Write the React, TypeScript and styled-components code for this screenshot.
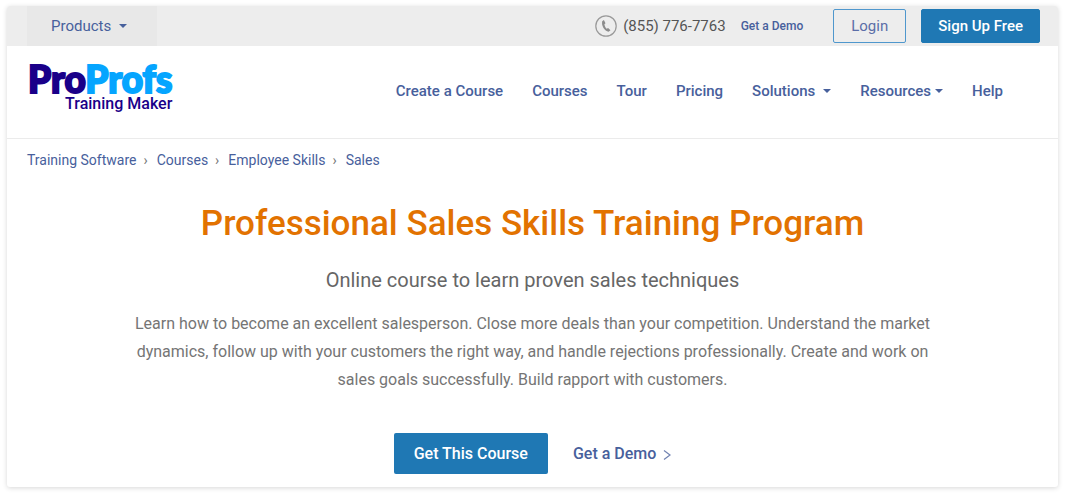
import React from "react";
import styled, { createGlobalStyle } from "styled-components";

const navy = "#47609c";
const blue = "#1f78b4";

const GlobalStyle = createGlobalStyle`
  *, *::before, *::after { box-sizing: border-box; }
  body {
    margin: 0;
    background: #fff;
    font-family: Roboto, "Liberation Sans", sans-serif;
    color: #666;
  }
  a { color: ${navy}; text-decoration: none; }
  button { font-family: inherit; cursor: pointer; }
`;

const Card = styled.div`
  margin: 6px 7px 8px;
  background: #fff;
  border-radius: 3px;
  box-shadow: 0 1px 5px rgba(0, 0, 0, 0.16);
`;

const TopBar = styled.div`
  display: flex;
  align-items: center;
  height: 40px;
  padding: 0 18px 0 20px;
  background: #ededed;
  border-radius: 3px 3px 0 0;
`;

const ProductsButton = styled.button`
  display: flex;
  align-items: center;
  gap: 8px;
  align-self: stretch;
  width: 130px;
  padding: 0 24px;
  border: 0;
  background: #e8e8e8;
  color: ${navy};
  font-size: 15px;
`;

const Caret = styled.span`
  display: inline-block;
  border: 4px solid transparent;
  border-top-color: currentColor;
  border-bottom-width: 0;
`;

const Phone = styled.a`
  display: flex;
  align-items: center;
  gap: 6px;
  margin-left: auto;
  color: #555;
  font-size: 15px;
`;

const DemoLink = styled.a`
  margin: 0 30px 0 15px;
  font-size: 12px;
  font-weight: 500;
`;

const BarButton = styled.button<{ $filled?: boolean }>`
  height: 34px;
  margin-top: -1px;
  padding: 0 ${(p) => (p.$filled ? 16 : 17)}px;
  border: 1px solid ${(p) => (p.$filled ? blue : "#4f97cd")};
  border-radius: 2px;
  background: ${(p) => (p.$filled ? blue : "transparent")};
  color: ${(p) => (p.$filled ? "#fff" : "#5b6ea8")};
  font-size: 15px;
  font-weight: ${(p) => (p.$filled ? 500 : 400)};
  & + & { margin-left: 15px; }
`;

const Header = styled.header`
  display: flex;
  align-items: flex-start;
  justify-content: space-between;
  height: 93px;
  padding: 17px 55px 0 21px;
  border-bottom: 1px solid #ebebeb;
`;

const Logo = styled.a`
  display: flex;
  flex-direction: column;
  align-items: flex-end;
  color: #1a0089;
`;

const Brand = styled.span`
  font-family: Lato, sans-serif;
  font-size: 37px;
  font-weight: 900;
  line-height: 32px;
  -webkit-text-stroke: 2px currentColor;
  span { color: #05a5ff; }
`;

const Product = styled.span`
  font-size: 16px;
  font-weight: 500;
  line-height: 18px;
`;

const Nav = styled.nav`
  display: flex;
  gap: 29px;
  padding-top: 18px;
`;

const NavLink = styled.a<{ $gap?: number }>`
  display: flex;
  align-items: center;
  gap: ${(p) => p.$gap ?? 8}px;
  font-size: 15px;
  font-weight: 500;
  line-height: 20px;
`;

const Crumbs = styled.nav`
  display: flex;
  gap: 7px;
  padding: 11px 20px;
  font-size: 14px;
  line-height: 20px;
  span { color: #777; margin-right: 2px; }
`;

const Hero = styled.main`
  display: flex;
  flex-direction: column;
  align-items: center;
  padding: 21px 20px 13px;
  text-align: center;
`;

const Title = styled.h1`
  margin: 0;
  color: #e27200;
  font-size: 35px;
  font-weight: 500;
  line-height: 44px;
`;

const Subtitle = styled.h2`
  margin: 22px 0 18px;
  font-size: 20px;
  font-weight: 400;
  line-height: 24px;
`;

const Description = styled.p`
  max-width: 800px;
  margin: 0 0 39px;
  color: #757575;
  font-size: 16px;
  line-height: 28px;
`;

const Actions = styled.div`
  display: flex;
  align-items: center;
  gap: 25px;
`;

const CourseButton = styled.button`
  height: 41px;
  padding: 0 20px;
  border: 0;
  border-radius: 2px;
  background: ${blue};
  color: #fff;
  font-size: 16px;
  font-weight: 500;
`;

const TextAction = styled.a`
  display: flex;
  align-items: center;
  gap: 7px;
  font-size: 16px;
  font-weight: 500;
`;

const PhoneIcon = () => (
  <svg width="22" height="22" viewBox="0 0 22 22" aria-hidden="true">
    <circle cx="11" cy="11" r="10.2" fill="none" stroke="#999" strokeWidth="1.2" />
    <path
      d="M8.9 5 7.2 6.2C6.2 10.8 9.5 15.8 13.6 16.8l1.9-1.5-2.4-2.2-1.4.7C10.6 12.8 9.8 11.2 9.4 9.2l1.1-1z"
      fill="#8c8c8c"
    />
  </svg>
);

const ChevronIcon = () => (
  <svg width="8" height="12" viewBox="0 0 8 12" fill="none" stroke="#7183b2" strokeWidth="1.2" aria-hidden="true">
    <path d="m1 2.5 6 4.5-6 4.5" />
  </svg>
);

const links: { label: string; menu?: boolean; gap?: number }[] = [
  { label: "Create a Course" },
  { label: "Courses" },
  { label: "Tour" },
  { label: "Pricing" },
  { label: "Solutions", menu: true },
  { label: "Resources", menu: true, gap: 4 },
  { label: "Help" },
];

const crumbs = ["Training Software", "Courses", "Employee Skills", "Sales"];

export default function App() {
  return (
    <>
      <GlobalStyle />
      <Card>
        <TopBar>
          <ProductsButton>
            Products <Caret />
          </ProductsButton>
          <Phone href="tel:8557767763">
            <PhoneIcon />
            (855) 776-7763
          </Phone>
          <DemoLink href="#demo">Get a Demo</DemoLink>
          <BarButton>Login</BarButton>
          <BarButton $filled>Sign Up Free</BarButton>
        </TopBar>
        <Header>
          <Logo href="#home">
            <Brand>
              Pro<span>Profs</span>
            </Brand>
            <Product>Training Maker</Product>
          </Logo>
          <Nav>
            {links.map((l) => (
              <NavLink key={l.label} href="#nav" $gap={l.gap}>
                {l.label}
                {l.menu && <Caret />}
              </NavLink>
            ))}
          </Nav>
        </Header>
        <Crumbs aria-label="Breadcrumb">
          {crumbs.map((c, i) => (
            <React.Fragment key={c}>
              {i > 0 && <span>›</span>}
              <a href="#crumb">{c}</a>
            </React.Fragment>
          ))}
        </Crumbs>
        <Hero>
          <Title>Professional Sales Skills Training Program</Title>
          <Subtitle>Online course to learn proven sales techniques</Subtitle>
          <Description>
            Learn how to become an excellent salesperson. Close more deals than your competition.
            Understand the market dynamics, follow up with your customers the right way, and handle
            rejections professionally. Create and work on sales goals successfully. Build rapport
            with customers.
          </Description>
          <Actions>
            <CourseButton>Get This Course</CourseButton>
            <TextAction href="#demo">
              Get a Demo <ChevronIcon />
            </TextAction>
          </Actions>
        </Hero>
      </Card>
    </>
  );
}
